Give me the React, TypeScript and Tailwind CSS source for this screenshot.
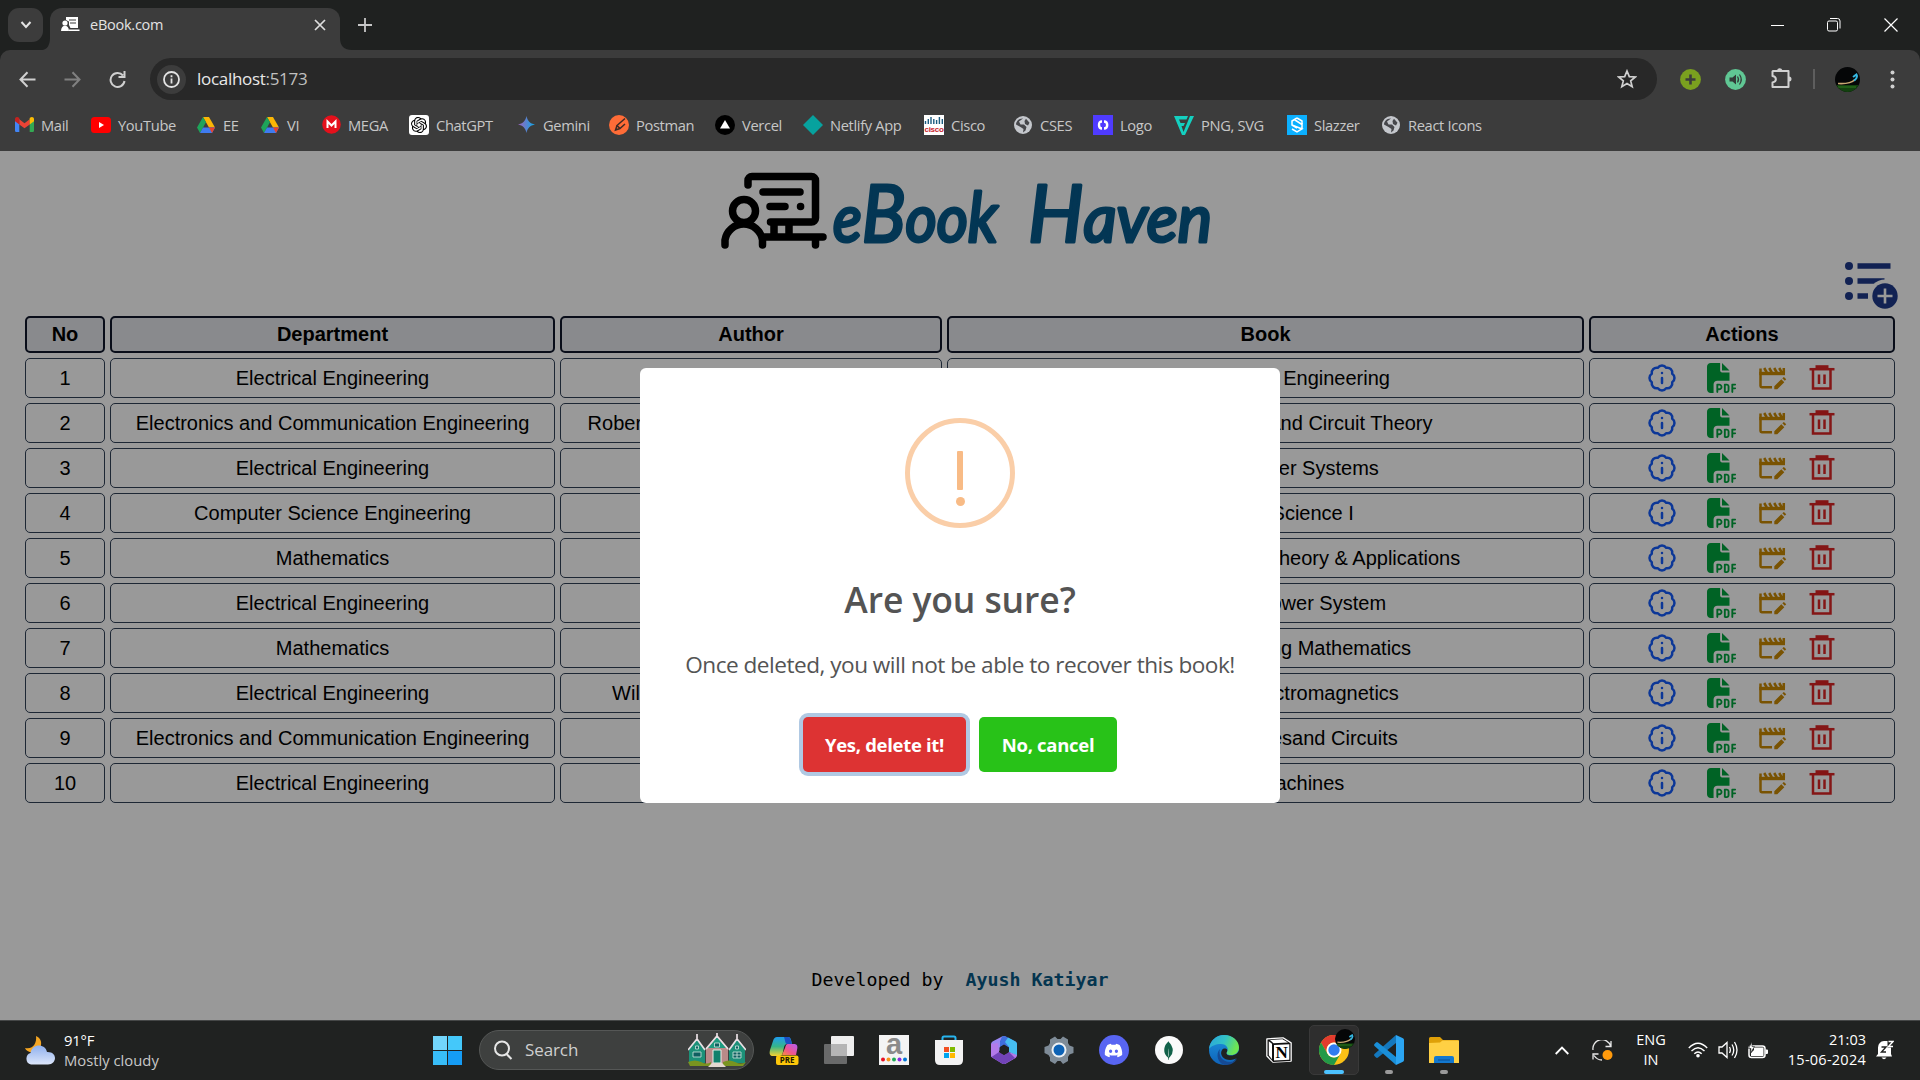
import React from "react";
import { BadgeInfo } from "lucide-react";
import { FaFilePdf, FaDiscord } from "react-icons/fa6";
import { SiMongodb, SiOpenai } from "react-icons/si";

const DriveIcon = () => (
  <svg width="18" height="18" viewBox="0 0 18 18">
    <path d="M6 1h6l6 10.5h-6z" fill="#fbb605" />
    <path d="M6 1l3 5.2L3 17 0 11.5z" fill="#1ea45a" />
    <path d="M3 17l3-5.5h12L15 17z" fill="#3f7bf0" />
    <path d="M12 11.5h6l-3 5.5z" fill="#e8432f" />
  </svg>
);

const GlobeIcon = () => (
  <svg width="18" height="18" viewBox="0 0 18 18">
    <circle cx="9" cy="9" r="9" fill="#c4c7cc" />
    <path d="M9 2.500L5 5.500l1.500 3H10l2.500 2.500-1 3.500L9 16.500l.5-3.500L6.500 11 2 8.500C2 5 5.500 2 9 2.500zM12 2.800l3.500 4-1.500 2.700-3-1.500-.5-3z" fill="#46474b" />
  </svg>
);

const bookmarks: { label: string; width: string; icon: React.ReactNode }[] = [
  {
    label: "Mail",
    width: "w-[77px]",
    icon: (
      <svg width="19" height="15" viewBox="0 0 19 15">
        <path d="M0 2h4.3v13H1.2A1.2 1.2 0 0 1 0 13.8z" fill="#4285f4" />
        <path d="M14.7 2H19v11.8a1.2 1.2 0 0 1-1.2 1.2h-3.1z" fill="#34a853" />
        <path d="M4.3 2.2l5.2 4 5.2-4v5.2L9.500 11.300 4.3 7.400z" fill="#ea4335" />
        <path d="M0 2C0 .2 2.200-.6 3.600.5l.7.6v6.300L0 4.200z" fill="#c5221f" />
        <path d="M19 2c0-1.800-2.200-2.600-3.600-1.500l-.7.6v6.300L19 4.200z" fill="#fbbc04" />
      </svg>
    ),
  },
  {
    label: "YouTube",
    width: "w-[105px]",
    icon: (
      <svg width="20" height="16" viewBox="0 0 20 16">
        <rect width="20" height="16" rx="3.500" fill="#f00" />
        <path d="M8 5v6l5-3z" fill="#fff" />
      </svg>
    ),
  },
  { label: "EE", width: "w-[64px]", icon: <DriveIcon /> },
  { label: "VI", width: "w-[61px]", icon: <DriveIcon /> },
  {
    label: "MEGA",
    width: "w-[88px]",
    icon: (
      <svg width="19" height="19" viewBox="0 0 19 19">
        <circle cx="9.500" cy="9.500" r="9.300" fill="#e5101b" />
        <path d="M5.500 13V6.500l4 4 4-4V13" fill="none" stroke="#fff" strokeWidth="2" />
      </svg>
    ),
  },
  {
    label: "ChatGPT",
    width: "w-[107px]",
    icon: (
      <span className="flex size-5 items-center justify-center rounded-[3px] bg-white text-black">
        <SiOpenai size={16} />
      </span>
    ),
  },
  {
    label: "Gemini",
    width: "w-[93px]",
    icon: (
      <svg width="17" height="17" viewBox="0 0 17 17">
        <defs>
          <linearGradient id="gem" x1="0" y1="0" x2="1" y2="0">
            <stop offset="0.1" stopColor="#9168c0" />
            <stop offset="0.500" stopColor="#5684d1" />
            <stop offset="0.900" stopColor="#1ba1e3" />
          </linearGradient>
        </defs>
        <path d="M8.500 0C9.500 5 12 7.500 17 8.500 12 9.500 9.500 12 8.500 17 7.500 12 5 9.500 0 8.500 5 7.500 7.500 5 8.500 0z" fill="url(#gem)" />
      </svg>
    ),
  },
  {
    label: "Postman",
    width: "w-[106px]",
    icon: (
      <svg width="20" height="20" viewBox="0 0 20 20">
        <circle cx="10" cy="10" r="10" fill="#ff6c37" />
        <path d="M16 3.500L8 10.500l3 3 5-4.500M8 10.500L6.500 15l4.500-1.500" fill="none" stroke="#3c2a24" strokeWidth="1.500" />
      </svg>
    ),
  },
  {
    label: "Vercel",
    width: "w-[88px]",
    icon: (
      <svg width="20" height="20" viewBox="0 0 20 20">
        <circle cx="10" cy="10" r="10" fill="#000" />
        <path d="M10 5l5 8.500H5z" fill="#fff" />
      </svg>
    ),
  },
  {
    label: "Netlify App",
    width: "w-[121px]",
    icon: (
      <svg width="20" height="20" viewBox="0 0 20 20">
        <path d="M10 0l10 10-10 10L0 10z" fill="#07a29e" />
      </svg>
    ),
  },
  {
    label: "Cisco",
    width: "w-[89px]",
    icon: (
      <span className="flex size-5 flex-col items-center bg-white">
        <svg width="20" height="10" viewBox="0 0 20 10">
          <path d="M1.500 6v3M4.300 4v5M7 2v7M9.800 4v5M12.600 5v4M15.400 2v7M18.300 4v5" stroke="#1b5c80" strokeWidth="1.400" />
        </svg>
        <span className="font-['Liberation_Sans'] text-[8px] leading-[9px] font-bold tracking-[-0.3px] text-[#c8232c]">cisco</span>
      </span>
    ),
  },
  { label: "CSES", width: "w-[80px]", icon: <GlobeIcon /> },
  {
    label: "Logo",
    width: "w-[81px]",
    icon: (
      <svg width="20" height="20" viewBox="0 0 20 20">
        <rect width="20" height="20" fill="#4f3bff" />
        <path d="M9 6.500C6 6.500 6 8 6 10s1 3.500 3 3.500M11 6.500c2 0 3.200 1.500 3.200 3.500s-1.200 3.500-3.200 3.500" fill="none" stroke="#fff" strokeWidth="2.400" />
      </svg>
    ),
  },
  {
    label: "PNG, SVG",
    width: "w-[113px]",
    icon: (
      <svg width="20" height="20" viewBox="0 0 20 20">
        <path d="M0 1h14l-1.500 3.500H5L6.500 8H11l-1.500 3H7.500l2 6 6.500-16h4L11 20H8z" fill="#14d0c0" />
      </svg>
    ),
  },
  {
    label: "Slazzer",
    width: "w-[94px]",
    icon: (
      <svg width="20" height="20" viewBox="0 0 20 20">
        <rect width="20" height="20" fill="#0bb0ff" />
        <path d="M10 3L5 6v4l10 4-5 3-5-3M10 3l5 3v4M5 10l5 3M8 5l7 4.500v4" fill="none" stroke="#fff" strokeWidth="1.500" />
      </svg>
    ),
  },
  { label: "React Icons", width: "w-[110px]", icon: <GlobeIcon /> },
];

const Avatar = ({ size }: { size: number }) => (
  <svg width={size} height={size} viewBox="0 0 25 25">
    <defs>
      <clipPath id="avc">
        <circle cx="12.500" cy="12.500" r="12.500" />
      </clipPath>
    </defs>
    <g clipPath="url(#avc)">
      <rect width="25" height="25" fill="#050607" />
      <rect y="18" width="25" height="7" fill="#12400f" />
      <path d="M3 20h18" stroke="#2c7a1e" strokeWidth="1.200" />
      <path d="M3 16.500c8 .5 14-1 17-4" stroke="#c9a873" strokeWidth="1.600" fill="none" />
      <path d="M18 10l3.500-2.500c1.500 2-.5 5-2.500 6" stroke="#35b6e0" strokeWidth="2" fill="none" />
    </g>
  </svg>
);

function Browser() {
  return (
    <header className="h-[151px] shrink-0 bg-[#1f2120] font-['Open_Sans',sans-serif]">
      <div className="flex h-[50px] items-end">
        <div className="mb-2 ml-2 flex h-[34px] w-[35px] items-center justify-center rounded-[11px] bg-[#3c3c3c]">
          <svg width="12" height="8" viewBox="0 0 12 8" fill="none" stroke="#e3e3e3" strokeWidth="2">
            <path d="M1.500 1l4.500 5 4.500-5" />
          </svg>
        </div>
        <svg className="-ml-px" width="8" height="12" viewBox="0 0 8 12">
          <path d="M8 0c0 7-3 12-8 12h8z" fill="#3c3c3c" />
        </svg>
        <div className="flex h-[42px] w-[290px] items-center rounded-t-[12px] bg-[#3c3c3c] pr-[14px] pb-[9px] pl-[11px]">
          <svg width="19" height="15" viewBox="0 0 19 15" fill="#fff">
            <path d="M5 0h12v11H9.500L8 8V4.500L5 3z" />
            <circle cx="4" cy="6" r="2.600" />
            <path d="M0 14c0-7 8-7 8 0zM8 12.500h10.500V14H8z" />
            <path d="M8 3h7M9 6h6" stroke="#3c3c3c" />
          </svg>
          <span className="ml-[10px] text-[14.500px] tracking-[-0.25px] text-[#e3e3e3]">eBook.com</span>
          <svg className="ml-auto" width="12" height="12" viewBox="0 0 12 12" stroke="#dedede" strokeWidth="1.700">
            <path d="M1 1l10 10M11 1L1 11" />
          </svg>
        </div>
        <svg width="12" height="12" viewBox="0 0 12 12">
          <path d="M0 0c0 8 4 12 12 12H0z" fill="#3c3c3c" />
        </svg>
        <svg className="mb-[18px] ml-[6px]" width="14" height="14" viewBox="0 0 14 14" stroke="#c7c7c7" strokeWidth="1.800">
          <path d="M7 0v14M0 7h14" />
        </svg>
        <div className="mb-[18px] ml-auto flex items-center gap-[43px] pr-[22px]">
          <span className="h-px w-[13px] bg-white" />
          <svg width="14" height="14" viewBox="0 0 14 14" fill="none" stroke="#fff">
            <rect x="0.500" y="3" width="10" height="10" rx="1.500" />
            <path d="M3 .5h7.500a2.500 2.500 0 0 1 2.500 2.500v7.500" />
          </svg>
          <svg width="14" height="14" viewBox="0 0 14 14" stroke="#fff" strokeWidth="1.200">
            <path d="M.5.5l13 13M13.500.5l-13 13" />
          </svg>
        </div>
      </div>
      <div className="flex h-[101px] flex-col rounded-t-[10px] bg-[#3c3c3c]">
        <div className="mt-2 flex h-[42px] items-center">
          <svg className="ml-[19px]" width="17" height="17" viewBox="0 0 17 17" fill="none" stroke="#d0d0d0" strokeWidth="2">
            <path d="M16.500 8.500H2M8.500 1.300L1.500 8.500l7 7.200" />
          </svg>
          <svg className="ml-[28px]" width="17" height="17" viewBox="0 0 17 17" fill="none" stroke="#808080" strokeWidth="2">
            <path d="M.5 8.500H15M8.500 1.300l7 7.200-7 7.200" />
          </svg>
          <svg className="ml-[28px]" width="17" height="17" viewBox="0 0 17 17" fill="none" stroke="#d0d0d0" strokeWidth="2">
            <path d="M14 4.500a7 7 0 1 0 1.500 5.500M15.500 0v6h-6" />
          </svg>
          <div className="ml-[24px] flex h-[42px] w-[1507px] items-center rounded-full bg-[#282828] pl-[7px]">
            <div className="flex size-[29px] items-center justify-center rounded-full bg-[#3c3c3c]">
              <svg width="17" height="17" viewBox="0 0 17 17" fill="none" stroke="#e3e3e3" strokeWidth="1.800">
                <circle cx="8.500" cy="8.500" r="7.500" />
                <path d="M8.500 7.500v5M8.500 4.300v1.900" />
              </svg>
            </div>
            <span className="ml-[11px] text-[17px] tracking-[-0.3px] text-[#e8e8e8]">
              localhost<span className="text-[#c0c0c0]">:5173</span>
            </span>
            <svg className="mr-[20px] ml-auto" width="20" height="20" viewBox="0 0 20 20" fill="none" stroke="#d0d0d0" strokeWidth="1.700">
              <path d="M10 2l2.300 5.600 6 .4-4.600 3.900 1.500 5.900L10 14.600l-5.200 3.200 1.500-5.900L1.700 8l6-.4z" />
            </svg>
          </div>
          <svg className="ml-[23px]" width="21" height="21" viewBox="0 0 21 21">
            <circle cx="10.500" cy="10.500" r="10.400" fill="#7aa01f" />
            <path d="M10.500 5.500v10M5.500 10.500h10" stroke="#3c3c3c" strokeWidth="2.600" />
          </svg>
          <svg className="ml-[24px]" width="21" height="21" viewBox="0 0 21 21">
            <circle cx="10.500" cy="10.500" r="10.400" fill="#60c794" />
            <path d="M4.500 8.500h3l3.500-3v10l-3.500-3h-3z" fill="#333b38" />
            <path d="M12.500 7.500q2 3 0 6M14.500 5.500q3.500 5 0 10" fill="none" stroke="#333b38" strokeWidth="1.200" />
          </svg>
          <svg className="mb-[3px] ml-[24px]" width="22" height="22" viewBox="0 0 22 22" fill="none" stroke="#d0d0d0" strokeWidth="2">
            <path d="M3 4h15.500v16H2.500v-4.500c4.500-1 4.500-5.500 0-6.500V4.500z" strokeLinejoin="round" />
            <path d="M7 3.200a2.800 2.800 0 0 1 5.400 0zM19 9.500a2.500 2.500 0 0 1 0 5z" fill="#d0d0d0" stroke="none" />
          </svg>
          <span className="ml-[21px] h-5 w-[2px] bg-[#5e5e5e]" />
          <span className="ml-[20px]">
            <Avatar size={25} />
          </span>
          <svg className="ml-[30px]" width="5" height="19" viewBox="0 0 5 19" fill="#d0d0d0">
            <circle cx="2.500" cy="2.500" r="2" />
            <circle cx="2.500" cy="9.500" r="2" />
            <circle cx="2.500" cy="16.500" r="2" />
          </svg>
        </div>
        <nav className="mt-[5px] flex h-[40px] items-center pl-[14px]">
          {bookmarks.map((b) => (
            <div key={b.label} className={`flex shrink-0 items-center gap-[7px] ${b.width}`}>
              <span className="flex w-5 shrink-0 justify-center">{b.icon}</span>
              <span className="text-[14.700px] tracking-[-0.35px] whitespace-nowrap text-[#c7c7c7]">{b.label}</span>
            </div>
          ))}
        </nav>
      </div>
    </header>
  );
}

const Logo = () => (
  <svg className="overflow-visible" width="500" height="80" viewBox="0 0 500 80">
    <g fill="none" stroke="#000" strokeWidth="7.500" strokeLinecap="round" strokeLinejoin="round">
      <path d="M27 13V8.500a4 4 0 0 1 4-4h59.500a4 4 0 0 1 4 4V46a4 4 0 0 1-4 4H49.500" />
      <path d="M42 20h37M49 34.500h15M79.500 34.500h.1" />
      <circle cx="23" cy="39" r="11.500" />
      <path d="M4 73v-5a19 19 0 0 1 37.500 0v5M44 65h58M94.500 66v7M53 52v12M68 52v12" />
    </g>
    <g fill="#055a8c" stroke="#055a8c" strokeWidth="3.200" strokeLinejoin="round" className="font-['Lato',sans-serif] text-[66px] italic">
      <text x="112" y="70" textLength="165" lengthAdjust="spacingAndGlyphs">
        e<tspan className="text-[80px]">B</tspan>oo<tspan className="text-[70px]">k</tspan>
      </text>
      <text x="307" y="70" textLength="184" lengthAdjust="spacingAndGlyphs">
        <tspan className="text-[80px]">H</tspan>aven
      </text>
    </g>
  </svg>
);

const EditIcon = () => (
  <svg width="30" height="30" viewBox="0 0 30 30">
    <path d="M3.500 5.500v17.500q0 1.200 1.200 1.200H15" fill="none" stroke="#ca8a04" strokeWidth="2.500" />
    <path d="M2.300 8.800H28v3.400H2.300z" fill="#ca8a04" />
    <path d="M7.200 5l2.600 4.500M12.200 5l2.600 4.500M17.200 5l2.600 4.500M22.200 5l2.600 4.500M26.800 5v5" stroke="#ca8a04" strokeWidth="2.500" />
    <path d="M17.300 26.200v-3l7-7 3 3-7 7zM25.300 15.200l1.600-1.300 2.300 2.400-1.400 1.500z" fill="#ca8a04" />
  </svg>
);

const TrashIcon = () => (
  <svg width="30" height="30" viewBox="0 0 30 30" fill="none" stroke="#dc2626" strokeWidth="2.500">
    <path d="M2.500 6.200h25" />
    <path d="M8.500 3.700h13" strokeWidth="3" />
    <path d="M6 7v18.500h17.500V7M12 11.500v9.500M17.500 11.500v9.500" />
  </svg>
);

const books = [
  ["Electrical Engineering", "V. K. Mehta", "Basic Electrical Engineering "],
  ["Electronics and Communication Engineering", "Robert L. Boylestad Louis Nashelsky", "Electronic Devices and Circuit Theory"],
  ["Electrical Engineering", "C. L. Wadhwa", "Electrical Power Systems"],
  ["Computer Science Engineering", "Reema Thareja", "Computer Science I"],
  ["Mathematics", "J. N. Sharma", "Differential Equations Theory & Applications"],
  ["Electrical Engineering", "Hadi Saadat", "Elements of Power System"],
  ["Mathematics", "B. S. Grewal", "Higher Engineering Mathematics"],
  ["Electrical Engineering", "William H. Hayt & John A. Buck", "Engineering Electromagnetics"],
  ["Electronics and Communication Engineering", "Jacob Millman", "Electrical Devicesand Circuits"],
  ["Electrical Engineering", "P. S. Bimbhra", "Electric Machines"],
];

const cell = "flex items-center justify-center rounded-[5px] border border-slate-700";
const head = "flex items-center justify-center rounded-[5px] border-2 border-slate-900 bg-gray-200 pb-[2px] font-bold";
const columns = "grid grid-cols-[80px_445px_382px_637px_306px] gap-[5px]";

function Library() {
  return (
    <div className="flex h-full flex-col bg-white font-['Liberation_Sans',Arial,sans-serif] text-[20px] leading-[30px] text-black">
      <div className="mt-[21px] flex h-[80px] justify-center pl-[22px]">
        <Logo />
      </div>
      <div className="mt-[9px] flex h-[50px] justify-end pr-[20px]">
        <svg width="56" height="50" viewBox="0 0 56 50">
          <g fill="#1e3a8a">
            <circle cx="5" cy="5" r="4" />
            <circle cx="5" cy="20" r="4" />
            <circle cx="5" cy="35" r="4" />
            <path d="M13.500 2.200h33v5.600h-33zM13.500 17.200h27v5.600h-27zM13.500 32.200H24v5.600H13.500z" />
          </g>
          <circle cx="41" cy="35" r="16.500" fill="#fff" />
          <circle cx="41" cy="35" r="12.700" fill="#1e3a8a" />
          <path d="M41 27.500v15M33.500 35h15" stroke="#fff" strokeWidth="2.600" />
        </svg>
      </div>
      <div className="mt-[5px] flex flex-col gap-[5px] pl-[25px]">
        <div className={`${columns} h-[37px]`}>
          {["No", "Department", "Author", "Book", "Actions"].map((h) => (
            <div key={h} className={head}>{h}</div>
          ))}
        </div>
        {books.map(([dept, author, book], i) => (
          <div key={i} className={`${columns} h-[40px]`}>
            <div className={cell}>{i + 1}</div>
            <div className={cell}>{dept}</div>
            <div className={cell}>{author}</div>
            <div className={`${cell} pl-px`}>{book}</div>
            <div className="flex items-center rounded-[5px] border border-slate-700 pl-[57px]">
              <BadgeInfo size={30} className="text-blue-600" />
              <FaFilePdf size={30} className="ml-[30px] text-green-600" />
              <span className="ml-[20px]"><EditIcon /></span>
              <span className="ml-[20px]"><TrashIcon /></span>
            </div>
          </div>
        ))}
      </div>
      <footer className="mt-auto mb-[25px] text-center font-['DejaVu_Sans_Mono',monospace] text-[18.270px] whitespace-pre">
        Developed by  <span className="font-bold text-[#075985]">Ayush Katiyar</span>
      </footer>
    </div>
  );
}

function ConfirmDialog() {
  return (
    <div className="flex h-[435px] w-[640px] flex-col items-center rounded-[6px] bg-white font-['Open_Sans',sans-serif]">
      <div className="mt-[50px] flex size-[110px] shrink-0 flex-col items-center rounded-full border-5 border-[#facea8] pt-[28px]">
        <span className="h-[39px] w-[6px] rounded-[1px] bg-[#f8bb86]" />
        <span className="mt-[7px] size-[9px] rounded-full bg-[#f8bb86]" />
      </div>
      <h2 className="mt-[46px] text-[35.500px] leading-[50px] font-semibold tracking-[-0.1px] text-[#545454]">Are you sure?</h2>
      <p className="mt-[24px] text-[22.600px] leading-[34px] tracking-[-0.5px] whitespace-nowrap text-[#545454]">
        Once deleted, you will not be able to recover this book!
      </p>
      <div className="mt-[35px] flex gap-[13px] text-[18.500px] font-bold tracking-[-0.3px] text-white">
        <button className="h-[55px] w-[163px] rounded-[5px] bg-[#dd3333] whitespace-nowrap shadow-[0_0_0_4px_#b0c9e3]">Yes, delete it!</button>
        <button className="h-[55px] w-[138px] rounded-[5px] bg-[#28c218] whitespace-nowrap">No, cancel</button>
      </div>
    </div>
  );
}

const apps: { name: string; icon: React.ReactNode; state?: string }[] = [
  {
    name: "copilot",
    icon: (
      <svg className="overflow-visible" width="30" height="30" viewBox="0 0 30 30">
        <defs>
          <linearGradient id="cpa" x1="0" y1="0" x2="0" y2="1">
            <stop offset="0" stopColor="#1f9cf0" />
            <stop offset="0.500" stopColor="#35b58a" />
            <stop offset="1" stopColor="#f5d130" />
          </linearGradient>
          <linearGradient id="cpb" x1="1" y1="0" x2="0" y2="1">
            <stop offset="0" stopColor="#b55cf5" />
            <stop offset="0.600" stopColor="#f0558a" />
            <stop offset="1" stopColor="#f5903c" />
          </linearGradient>
        </defs>
        <path d="M8 2h11c3 0 3 3 4 7h-5c-3 0-3 4-4 8s-2 4-5 4H4c-3 0-4-2-3-6L4 6c1-3 2-4 4-4z" fill="url(#cpa)" />
        <path d="M15 2h4c2 0 3 3 4 7h-5c-2 0-2-5-3-7z" fill="#1b4fc4" />
        <path d="M19 9h6c3 0 4 2 3 6l-1 5H13l3-7c1-3 1-4 3-4z" fill="url(#cpb)" />
        <rect x="7" y="20.500" width="22.500" height="9.500" rx="2" fill="#fcc60a" />
        <text x="18.200" y="28.300" textAnchor="middle" fill="#201a00" className="font-['Open_Sans',sans-serif] text-[8px] font-bold">PRE</text>
      </svg>
    ),
  },
  {
    name: "taskview",
    icon: (
      <svg width="30" height="30" viewBox="0 0 30 30">
        <rect x="7" y="1" width="23" height="20" rx="1" fill="#eee" />
        <rect y="9" width="23" height="20" rx="1" fill="#777" fillOpacity="0.850" />
        <rect x="7" y="9" width="16" height="12" fill="#b5b5b5" />
      </svg>
    ),
  },
  {
    name: "a",
    icon: (
      <svg className="overflow-visible" width="30" height="30" viewBox="0 0 30 30">
        <rect width="30" height="30" fill="#f4f4f4" />
        <text x="15" y="19" textAnchor="middle" fill="#8b8b8b" className="font-['Liberation_Sans',sans-serif] text-[29px] font-bold">a</text>
        <circle cx="4" cy="24.500" r="2" fill="#e81123" />
        <circle cx="9.500" cy="24.500" r="2" fill="#f7941d" />
        <circle cx="15" cy="24.500" r="2" fill="#1faa59" />
        <circle cx="20.500" cy="24.500" r="2" fill="#8a2be2" />
        <circle cx="26" cy="24.500" r="2" fill="#0078d7" />
      </svg>
    ),
  },
  {
    name: "store",
    icon: (
      <svg width="30" height="30" viewBox="0 0 30 30">
        <path d="M8.500 7V3q0-1.500 1.500-1.500h10q1.500 0 1.500 1.500v4" fill="none" stroke="#27b5f0" strokeWidth="2" />
        <path d="M1 5h28v20q0 5-5 5H6q-5 0-5-5z" fill="#f3f3f3" />
        <path d="M10 12h5v5h-5z" fill="#f25022" />
        <path d="M16 12h5v5h-5z" fill="#7fba00" />
        <path d="M10 18h5v5h-5z" fill="#00a4ef" />
        <path d="M16 18h5v5h-5z" fill="#ffb900" />
      </svg>
    ),
  },
  {
    name: "office",
    icon: (
      <svg width="30" height="30" viewBox="0 0 30 30">
        <path d="M13 1.500Q15 .5 17 1.500l-6 5v9L2 22V9q0-1.500 1.500-2.500z" fill="#9a86f2" />
        <path d="M13 1.500Q15 .5 17 1.500l9.500 5Q28 7.500 28 9v8l-9-5-4-2.500-4 2.500V6.500z" fill="#3f6fdc" />
        <path d="M19 2.500l7.500 4Q28 7.500 28 9v12l-8-4v-5l-4-5z" fill="#46bdf0" />
        <path d="M2 9v11q0 2 1.500 2.800L13 28.500q2 1 4 0l9.500-5.500Q28 22 28 20l-8-3-5 3-5-3-1-9z" fill="#b37bea" />
        <path d="M2.500 22l7.500-5 5 3 5-3 6 6-9.500 5.500q-1.500 1-3.500 0z" fill="#7244b8" />
        <path d="M15 10l4.500 2.500v5L15 20l-4.500-2.500v-5z" fill="#202221" />
      </svg>
    ),
  },
  {
    name: "settings",
    icon: (
      <svg width="30" height="30" viewBox="0 0 30 30">
        <path d="M11 1.500l2.500 2.500h3L19 1.500l5 3v3.500l1.500 2.500 4 1.500v6l-4 1.500-1.500 2.500V26l-5 3-2.500-3h-3L11 29l-5-3v-3.500L4.500 20 .5 18v-6l4-1.500L6 8V4.500z" fill="#7f8c98" />
        <circle cx="15" cy="15" r="7.500" fill="#edf1f5" />
        <circle cx="15" cy="15" r="5.500" fill="#0d62b5" />
      </svg>
    ),
  },
  {
    name: "discord",
    icon: (
      <span className="flex size-[30px] items-center justify-center rounded-full bg-[#5865f2] text-white">
        <FaDiscord size={19} />
      </span>
    ),
  },
  {
    name: "mongodb",
    icon: (
      <span className="flex size-[28px] items-center justify-center rounded-full bg-[#fafafa] text-[#116149]">
        <SiMongodb size={19} />
      </span>
    ),
  },
  {
    name: "edge",
    icon: (
      <svg width="30" height="30" viewBox="0 0 30 30">
        <defs>
          <linearGradient id="edt" x1="0" y1="0" x2="1" y2="0.300">
            <stop offset="0" stopColor="#2aa4dc" />
            <stop offset="0.550" stopColor="#33c2c6" />
            <stop offset="1" stopColor="#6ee653" />
          </linearGradient>
          <linearGradient id="edb" x1="0" y1="0" x2="0" y2="1">
            <stop offset="0" stopColor="#1c93de" />
            <stop offset="1" stopColor="#0f62b8" />
          </linearGradient>
        </defs>
        <circle cx="15" cy="15" r="15" fill="url(#edb)" />
        <path d="M11 14c-2 6 2 13 10 13 3 0 5-1 7-3-3 5-8 6-12 6-7-1-10-11-5-16z" fill="#154a94" />
        <path d="M30 14c0 4-4 6.500-8 6.500-4 0-5-1.500-4-3.500 2-3-3-5-5-2-3 5 2 10 8 10 3 0 5-1 9-2.500z" fill="#202221" />
        <path d="M0 14C1 5 8 0 15 0c9 0 15 6 15 12.500 0 5-4 7.500-8 7.500-4 0-5-1.500-4-3 2-3 0-8-6-8-5 0-10 2-12 5z" fill="url(#edt)" />
      </svg>
    ),
  },
  {
    name: "notion",
    icon: (
      <svg className="overflow-visible" width="26" height="26" viewBox="0 0 26 26">
        <path d="M1 2l16-1 8 5v18l-18 1-6-6z" fill="#fff" stroke="#fff" strokeWidth="1.600" strokeLinejoin="round" />
        <path d="M1.500 2.500L17 1.500l7.500 4.800V24L7.200 25 1.500 18.500z" fill="#111" />
        <path d="M2.800 4.200L6 6.700v15.500l-3.200-4zM4 3l12.500-.7L22 5.500 7.500 6.300z" fill="#fff" />
        <path d="M8 8l15.300-.8v15.500L8 23.500z" fill="#fff" />
        <text x="15.700" y="21" textAnchor="middle" className="font-['Liberation_Serif',serif] text-[17px] font-bold">N</text>
      </svg>
    ),
  },
  {
    name: "chrome",
    state: "active",
    icon: (
      <div className="relative">
        <svg width="30" height="30" viewBox="0 0 30 30">
          <circle cx="15" cy="15" r="15" fill="#fbc116" />
          <path d="M2 7.500A15 15 0 0 1 28 7.500H15a7.500 7.500 0 0 0-6.500 11.200z" fill="#e33b2e" />
          <path d="M2 7.500A15 15 0 0 0 15 30l6.500-11.200a7.500 7.500 0 0 1-13 0z" fill="#229a48" />
          <circle cx="15" cy="15" r="7.500" fill="#fff" />
          <circle cx="15" cy="15" r="5.700" fill="#2f7cf0" />
        </svg>
        <span className="absolute -top-[6px] left-[16px]">
          <Avatar size={20} />
        </span>
      </div>
    ),
  },
  {
    name: "vscode",
    state: "open",
    icon: (
      <svg width="30" height="30" viewBox="0 0 30 30">
        <path d="M22 0v8L4 22.500q-1 .8-2 0L.5 21q-.8-1 0-2z" fill="#1478bd" />
        <path d="M22 30v-8L4 7.500q-1-.8-2 0L.5 9q-.8 1 0 2z" fill="#1a8fd8" />
        <path d="M22 0l7 3.300q1 .5 1 1.700v20q0 1.200-1 1.700L22 30z" fill="#2ba5f2" />
      </svg>
    ),
  },
  {
    name: "explorer",
    state: "open",
    icon: (
      <svg width="30" height="30" viewBox="0 0 30 30">
        <path d="M0 3.500Q0 2 1.500 2H11l3 3h15.500V12H0z" fill="#dfa008" />
        <path d="M0 8l11-.5 2.500-2H30V28H0z" fill="#ffd044" />
        <path d="M5 28v-5q0-2 2-2h16q2 0 2 2v5z" fill="#1378cf" />
        <path d="M9 25h12" stroke="#0b4f93" />
      </svg>
    ),
  },
];

const Houses = () => (
  <svg width="58" height="34" viewBox="0 0 58 34">
    <path d="M1 16l8-10 8 10v14H1zM41 16l8-10 8 10v14H41z" fill="#1c9078" />
    <path d="M18 15L29 2l11 13v16H18z" fill="#b98a88" />
    <path d="M20 15l9-11 9 11z" fill="#1d9b80" />
    <path d="M0 17L9 6l8 11M18 16L29 3l11 13M41 17l8-11 9 11M9 1v6M29 0v5M49 1v6" fill="none" stroke="#e9dfe4" strokeWidth="1.700" />
    <path d="M25 17h8v13h-8z" fill="#12806c" stroke="#e9efe9" />
    <path d="M5 19h8v5H5zM45 19h8v6h-8zM49 19v6M45 22h8M26.500 10h5v4h-5zM7.500 13h3v3h-3zM47.500 13h3v3h-3z" fill="#0f5f60" stroke="#cfe9df" strokeWidth="0.800" />
    <path d="M0 29q7-3 13 0t10 0v4H2zM35 29q6-3 12 0t11 0l-3 4H35z" fill="#7a9420" />
    <path d="M24 30h10l4 4H20z" fill="#e4d8d0" />
  </svg>
);

function Taskbar() {
  return (
    <footer className="flex h-[60px] shrink-0 items-center border-t border-[#454747] bg-[#202221] pb-px font-['Open_Sans',sans-serif] text-white">
      <div className="flex w-[433px] items-center pl-[25px]">
        <svg width="30" height="30" viewBox="0 0 30 30">
          <defs>
            <linearGradient id="cld" x1="0" y1="0" x2="0" y2="1">
              <stop offset="0" stopColor="#8fb0ee" />
              <stop offset="1" stopColor="#dce6fa" />
            </linearGradient>
          </defs>
          <path d="M11 1c8 3 6 14-1 16-5 1-9-1-10-4 8 2 12-5 11-12z" fill="#f5a623" />
          <path d="M6 29.500a6 6 0 0 1-.5-11.500C7 8.500 20 8 22 17c11-.5 10 12.500 1 12.500z" fill="url(#cld)" />
        </svg>
        <div className="ml-[9px] text-[14.800px] leading-5 tracking-[0px]">
          <div className="tracking-[-0.2px]">91°F</div>
          <div className="text-[#c8c8c8]">Mostly cloudy</div>
        </div>
      </div>
      <div className="grid grid-cols-2 gap-px">
        <span className="size-[14px] bg-[#72d5fb]" />
        <span className="size-[14px] bg-[#44c8fa]" />
        <span className="size-[14px] bg-[#38bdf8]" />
        <span className="size-[14px] bg-[#159cf5]" />
      </div>
      <div className="ml-[17px] flex h-[40px] w-[275px] items-center rounded-full border border-[#555756] bg-[#3e403f] pr-[7px] pl-[13px]">
        <svg width="20" height="20" viewBox="0 0 20 20" fill="none" stroke="#e6e6e6" strokeWidth="2">
          <circle cx="9" cy="8.500" r="7" />
          <path d="M13.500 14l5 5" />
        </svg>
        <span className="ml-[12px] text-[17px] tracking-[-0.1px] text-[#cfcfcf]">Search</span>
        <span className="ml-auto"><Houses /></span>
      </div>
      <div className="ml-[2px] flex">
        {apps.map((a) => (
          <div key={a.name} className="flex w-[55px] justify-center">
            <div
              className={
                a.state === "active"
                  ? "relative flex size-[50px] items-center justify-center rounded-[5px] border border-[#393939] bg-[#2e2e2e]"
                  : "relative flex size-[50px] items-center justify-center"
              }
            >
              {a.icon}
              {a.state && (
                <span
                  className={
                    a.state === "active"
                      ? "absolute bottom-0 h-1 w-5 rounded-full bg-[#4cc2ff]"
                      : "absolute bottom-px h-1 w-2 rounded-full bg-[#9a9a9a]"
                  }
                />
              )}
            </div>
          </div>
        ))}
      </div>
      <div className="ml-auto flex items-center pr-[26px]">
        <svg width="14" height="9" viewBox="0 0 14 9" fill="none" stroke="#fff" strokeWidth="1.800">
          <path d="M.7 8L7 1.500 13.300 8" />
        </svg>
        <svg className="ml-[23px]" width="21" height="21" viewBox="0 0 21 21" fill="none" stroke="#e8e8e8" strokeWidth="1.300">
          <path d="M1 10A9 9 0 0 1 18.500 6M19 1v5.500h-5.500M1 19.500V14h5.500M2 15.500q3 4.500 8 4.500" />
          <circle cx="15.500" cy="15" r="5" fill="#ff9a0c" stroke="none" />
        </svg>
        <div className="ml-[23px] w-[30px] text-center text-[14.500px] leading-5">
          <div>ENG</div>
          <div>IN</div>
        </div>
        <svg className="ml-[22px]" width="20" height="16" viewBox="0 0 20 16" fill="none" stroke="#fff" strokeWidth="1.400">
          <path d="M.8 6Q10-3.500 19.200 6M3.500 9Q10 2.500 16.500 9M6.300 11.800q3.700-3.600 7.400 0" />
          <circle cx="10" cy="13.800" r="1.800" fill="#fff" stroke="none" />
        </svg>
        <svg className="ml-[10px]" width="20" height="18" viewBox="0 0 20 18" fill="none" stroke="#fff" strokeWidth="1.300">
          <path d="M1 6h3l5-4.500v15L4 12H1zM11.500 6q1.700 3 0 6M14 3.500q3.500 5.500 0 11M16.500 1q5 8 0 16" />
        </svg>
        <svg className="ml-[10px]" width="20" height="17" viewBox="0 0 20 17">
          <rect x="1" y="4" width="16" height="11.500" rx="2.500" fill="none" stroke="#fff" strokeWidth="1.500" />
          <path d="M6 5.500h9.500v8.500H3V11l3-3zM17.500 7.500H19q1 0 1 1V11q0 1-1 1h-1.500z" fill="#fff" />
          <path d="M4 0L.5 6.500H3L2.500 11 6.500 4.500H4z" fill="#fff" stroke="#202221" strokeWidth="0.600" />
        </svg>
        <div className="ml-[16px] w-[82px] text-right text-[14.500px] leading-5 whitespace-nowrap">
          <div>21:03</div>
          <div className="tracking-[0.250px]">15-06-2024</div>
        </div>
        <svg className="ml-[10px]" width="18" height="20" viewBox="0 0 18 20">
          <path d="M2 14V7.500Q2.500 1.500 8 1h3.500v6.500H15V14l1 2.500H0zM5.500 17.500h5q-2.500 3.500-5 0z" fill="#fff" />
          <path d="M5.500 7h4.500l-4.500 5H10" fill="none" stroke="#202221" strokeWidth="1.400" />
          <path d="M12.500 1.500H17l-4.500 5H17" fill="none" stroke="#fff" strokeWidth="1.400" />
        </svg>
      </div>
    </footer>
  );
}

export default function App() {
  return (
    <div className="flex h-[1080px] w-[1920px] flex-col overflow-hidden">
      <Browser />
      <main className="relative h-[869px]">
        <Library />
        <div className="absolute inset-0 flex items-center justify-center bg-black/40">
          <ConfirmDialog />
        </div>
      </main>
      <Taskbar />
    </div>
  );
}
